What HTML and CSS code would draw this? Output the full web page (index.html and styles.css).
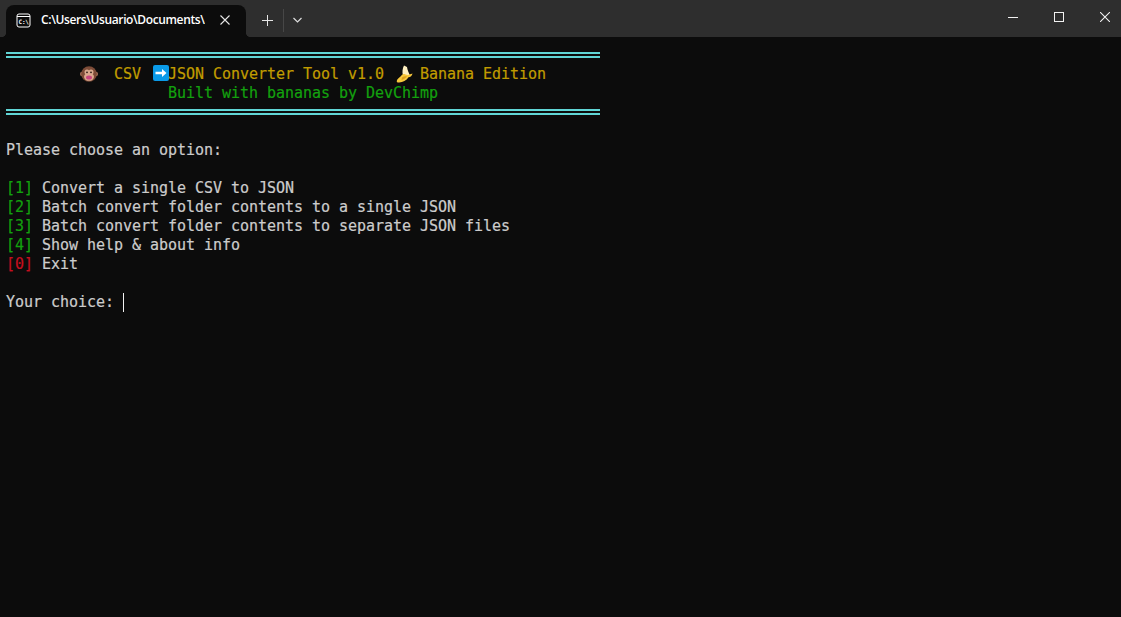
FILE: index.html
```html
<!DOCTYPE html>
<html lang="es">
<head>
<meta charset="utf-8">
<title>Terminal</title>
<link rel="stylesheet" href="styles.css">
</head>
<body>
<div class="window">
  <header class="titlebar">
    <div class="tab">
      <svg class="tab-icon" width="15" height="15" viewBox="0 0 15 15" fill="none" stroke="#fff">
        <rect x="1" y="1" width="13" height="13" rx="2"/>
        <path d="M1 3.5h13"/>
        <text x="2.600" y="11.200" class="tab-icon-text">C:\</text>
      </svg>
      <span class="tab-title">C:\Users\Usuario\Documents\</span>
      <svg class="tab-close" width="10" height="10" viewBox="0 0 10 10" stroke="#e6e6e6" stroke-width="1.1"><path d="M.5.5l9 9M9.5.5l-9 9"/></svg>
    </div>
    <div class="tab-actions">
      <svg class="new-tab" width="11" height="11" viewBox="0 0 11 11" stroke="#e6e6e6"><path d="M5.500 0v11M0 5.500h11"/></svg>
      <span class="divider"></span>
      <svg class="chevron" width="9" height="6" viewBox="0 0 9 6" fill="none" stroke="#dcdcdc" stroke-width="1.2"><path d="M.5 1l4 4 4-4"/></svg>
    </div>
    <div class="window-controls">
      <span class="control"><svg width="10" height="10" viewBox="0 0 10 10" stroke="#f2f2f2"><path d="M0 5.500h10"/></svg></span>
      <span class="control"><svg width="10" height="10" viewBox="0 0 10 10" fill="none" stroke="#f2f2f2"><rect x=".5" y=".5" width="9" height="9"/></svg></span>
      <span class="control"><svg width="10" height="10" viewBox="0 0 10 10" stroke="#f2f2f2" stroke-width="1.05"><path d="M0 0l10 10M10 0L0 10"/></svg></span>
    </div>
  </header>
  <main class="terminal">
    <div class="rule"></div>
    <div class="line yellow">        <span class="emoji"><svg class="monkey" width="18" height="18" viewBox="0 0 18 18"><circle cx="2.300" cy="9" r="2.300" fill="#a8745a"/><circle cx="15.700" cy="9" r="2.300" fill="#a8745a"/><circle cx="9" cy="9" r="7.800" fill="#7d4c38"/><ellipse cx="7" cy="7" rx="2.500" ry="2.600" fill="#d9ab90"/><ellipse cx="11" cy="7" rx="2.500" ry="2.600" fill="#d9ab90"/><ellipse cx="9" cy="11.800" rx="5" ry="4" fill="#dca98e"/><circle cx="7" cy="7.300" r=".9" fill="#2a1a14"/><circle cx="11" cy="7.300" r=".9" fill="#2a1a14"/><ellipse cx="9" cy="12.500" rx="3" ry="2" fill="#c8467e"/></svg></span>  CSV <span class="emoji"><svg class="arrow" width="18" height="18" viewBox="0 0 18 18"><rect x="0" y="0" width="16" height="16" rx="2" fill="#0a9ae8"/><path d="M2.500 6.700h6.500V4l4.500 4-4.500 4V9.300H2.500z" fill="#fff"/></svg></span>JSON Converter Tool v1.0 <span class="emoji"><svg class="banana" width="18" height="18" viewBox="0 0 18 18"><path d="M8 .5l3 1.500c.5 3 1.500 5.500 3 8.500H7C6 7 6.500 3.500 8 .5z" fill="#fff0c0"/><path d="M1 17.300C-.2 14.500 3 13 5 11c1.500-2 3-2.500 4.500-1.500L12 10l4.500-1.500c-.5 2.500-2 3.500-4 3.800-2.500 3.700-7 6-11.500 5z" fill="#f8c83c"/><path d="M6 12.500c1.500-1 3-1.500 5-1-1.500 1.800-3.500 3-5.500 3.500z" fill="#dd9f1c"/></svg></span> Banana Edition</div>
    <div class="line green">                  Built with bananas by DevChimp</div>
    <div class="rule"></div>
    <div class="line"> </div>
    <div class="line">Please choose an option:</div>
    <div class="line"> </div>
    <div class="line"><span class="green">[1]</span> Convert a single CSV to JSON</div>
    <div class="line"><span class="green">[2]</span> Batch convert folder contents to a single JSON</div>
    <div class="line"><span class="green">[3]</span> Batch convert folder contents to separate JSON files</div>
    <div class="line"><span class="green">[4]</span> Show help &amp; about info</div>
    <div class="line"><span class="red">[0]</span> Exit</div>
    <div class="line"> </div>
    <div class="line">Your choice: <span class="cursor"></span></div>
  </main>
</div>
</body>
</html>
```
FILE: styles.css
```css
* { box-sizing: border-box; }
html, body { margin: 0; height: 100%; background: #0c0c0c; }
body { overflow: hidden; }
.window { display: flex; flex-direction: column; width: 1121px; height: 617px; overflow: hidden; }

.titlebar {
  display: flex;
  align-items: flex-end;
  height: 37px;
  padding-left: 6px;
  background: #2e2e2e;
  flex: none;
}
.tab {
  position: relative;
  display: flex;
  align-items: center;
  width: 240px;
  height: 32px;
  padding: 0 16px 0 10px;
  background: #0c0c0c;
  border-radius: 8px 8px 0 0;
}
.tab::before, .tab::after {
  content: "";
  position: absolute;
  bottom: 0;
  width: 4px;
  height: 4px;
}
.tab::before { left: -4px; background: radial-gradient(circle at 0 0, #2e2e2e 3.6px, #0c0c0c 4.2px); }
.tab::after { right: -4px; background: radial-gradient(circle at 100% 0, #2e2e2e 3.6px, #0c0c0c 4.2px); }
.tab-icon { flex: none; margin-top: -2px; }
.tab-icon-text { font: 700 6px "DejaVu Sans Mono", monospace; fill: #fff; stroke: none; letter-spacing: -.3px; }
.tab-title {
  flex: none;
  width: 164px;
  margin-left: 10px;
  margin-top: -2px;
  overflow: hidden;
  white-space: nowrap;
  color: #fff;
  font: 600 12px/16px "Open Sans", "Noto Sans", sans-serif;
  letter-spacing: -.38px;
}
.tab-close { flex: none; margin-left: 15px; margin-top: -2px; }

.tab-actions {
  display: flex;
  align-items: center;
  align-self: stretch;
  padding-left: 16px;
}
.new-tab { flex: none; margin-top: 3px; }
.divider { width: 1px; height: 23px; margin: 4px 9px 0 10px; background: #474747; }
.chevron { flex: none; margin-top: 3px; }

.window-controls { display: flex; margin-left: auto; margin-right: -7px; align-self: flex-start; }
.control {
  display: flex;
  align-items: center;
  justify-content: center;
  width: 46px;
  height: 33px;
}
.control svg { display: block; }

.terminal {
  flex: 1;
  padding: 9px 6px 0;
  color: #cccccc;
  font: 15px/19px "DejaVu Sans Mono", monospace;
  letter-spacing: -.03px;
  -webkit-text-stroke: .2px currentColor;
}
.line { height: 19px; white-space: pre; }
.rule {
  width: 594px;
  height: 19px;
  background:
    linear-gradient(#61d6d6, #61d6d6) 0 6px / 100% 2px no-repeat,
    linear-gradient(#61d6d6, #61d6d6) 0 10px / 100% 2px no-repeat;
}
.yellow { color: #c19c00; }
.green { color: #13a10e; }
.red { color: #c50f1f; }
.emoji {
  display: inline-block;
  position: relative;
  width: 18px;
  height: 19px;
  vertical-align: top;
}
.emoji svg { position: absolute; left: 0; top: 0; }
.monkey { transform: translate(2px, 0); }
.arrow { transform: translate(3px, 0); }
.banana { transform: translate(3px, 0); }
.cursor {
  display: inline-block;
  width: 1px;
  height: 19px;
  background: #f2f2f2;
  vertical-align: top;
}
```
